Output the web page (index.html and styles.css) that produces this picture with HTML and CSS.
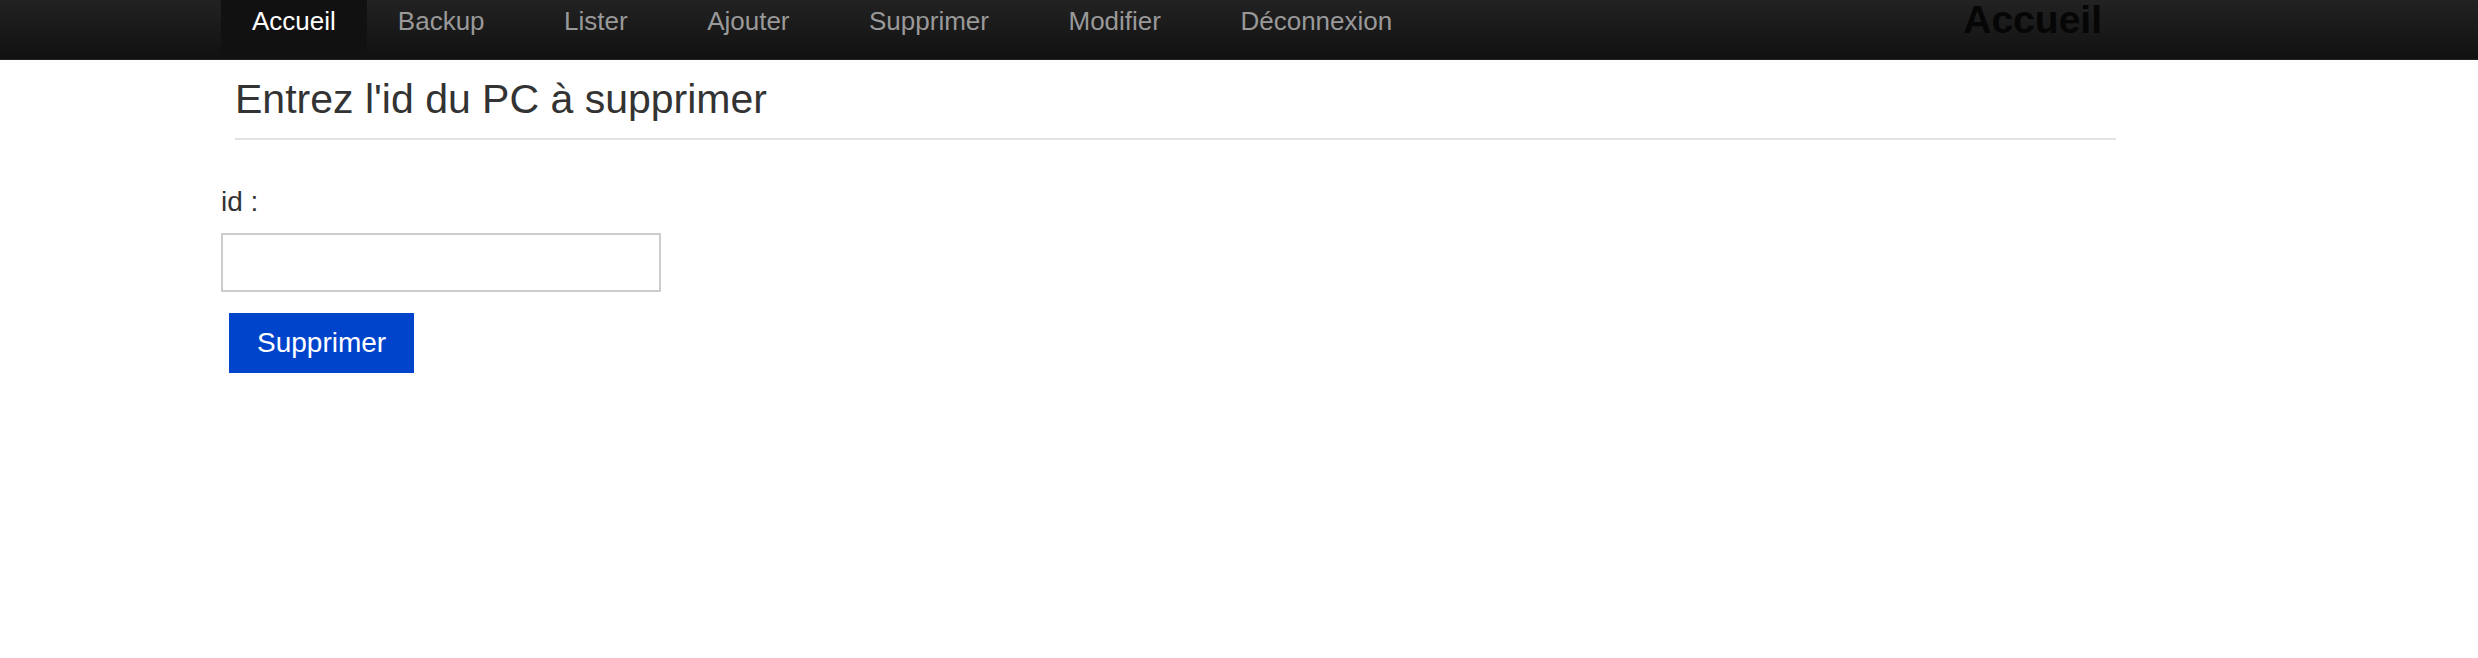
FILE: index.html
```html
<!DOCTYPE html>
<html lang="fr">
<head>
<meta charset="utf-8">
<title>Supprimer</title>
<link rel="stylesheet" href="styles.css">
</head>
<body>
<header class="navbar">
  <div class="navbar-inner">
    <ul class="nav">
      <li class="nav-item active"><a href="#">Accueil</a></li>
      <li class="nav-item"><a href="#">Backup</a></li>
      <li class="nav-item"><a href="#">Lister</a></li>
      <li class="nav-item"><a href="#">Ajouter</a></li>
      <li class="nav-item"><a href="#">Supprimer</a></li>
      <li class="nav-item"><a href="#">Modifier</a></li>
      <li class="nav-item"><a href="#">Déconnexion</a></li>
    </ul>
    <h1 class="brand">Accueil</h1>
  </div>
</header>
<main class="container">
  <div class="page-header">
    <h2 class="page-title">Entrez l'id du PC à supprimer</h2>
  </div>
  <form class="delete-form">
    <label class="field-label" for="pc-id">id :</label>
    <input class="field-input" type="text" id="pc-id" name="id">
    <button class="btn-primary" type="submit">Supprimer</button>
  </form>
</main>
</body>
</html>
```
FILE: styles.css
```css
html, body {
  margin: 0;
  padding: 0;
  background: #fff;
  font-family: "Liberation Sans", Arial, Helvetica, sans-serif;
  color: #333;
}

.navbar {
  height: 59px;
  border-bottom: 1px solid #252525;
  background: linear-gradient(to bottom, #222222, #111111);
}

.navbar-inner {
  display: flex;
  align-items: flex-start;
  margin-left: 221px;
  width: 1881px;
  height: 59px;
}

.nav {
  display: flex;
  list-style: none;
  margin: 0;
  padding: 0;
}

.nav-item + .nav-item {
  margin-left: 17.5px;
}

.nav-item.active + .nav-item {
  margin-left: 0;
}

.nav-item a {
  display: block;
  box-sizing: border-box;
  height: 59px;
  padding: 6px 31px 0;
  font-size: 26px;
  line-height: 30px;
  color: #999;
  text-decoration: none;
}

.nav-item.active a {
  background: #111;
  color: #fff;
}

.brand {
  margin: 0 0 0 auto;
  font-size: 39px;
  line-height: 40px;
  font-weight: bold;
  color: #060606;
}

.container {
  margin-left: 221px;
  width: 1895px;
}

.page-header {
  margin: 16px 0 0 14px;
  padding-bottom: 16px;
  border-bottom: 2px solid #e3e3e3;
}

.page-title {
  margin: 0;
  font-size: 41px;
  line-height: 46px;
  font-weight: normal;
  color: #333;
}

.delete-form {
  display: flex;
  flex-direction: column;
  align-items: flex-start;
}

.field-label {
  margin-top: 42px;
  font-size: 28px;
  line-height: 40px;
  color: #333;
}

.field-input {
  margin-top: 11px;
  width: 440px;
  height: 59px;
  box-sizing: border-box;
  border: 2px solid #ccc;
  border-radius: 0;
  padding: 0 12px;
  font-size: 28px;
  font-family: inherit;
  outline: none;
}

.btn-primary {
  margin: 21px 0 0 8px;
  height: 60px;
  padding: 0 28px;
  border: none;
  border-radius: 0;
  background: #0044cc;
  color: #fff;
  font-family: inherit;
  font-size: 28px;
  line-height: 60px;
  cursor: pointer;
}
```
